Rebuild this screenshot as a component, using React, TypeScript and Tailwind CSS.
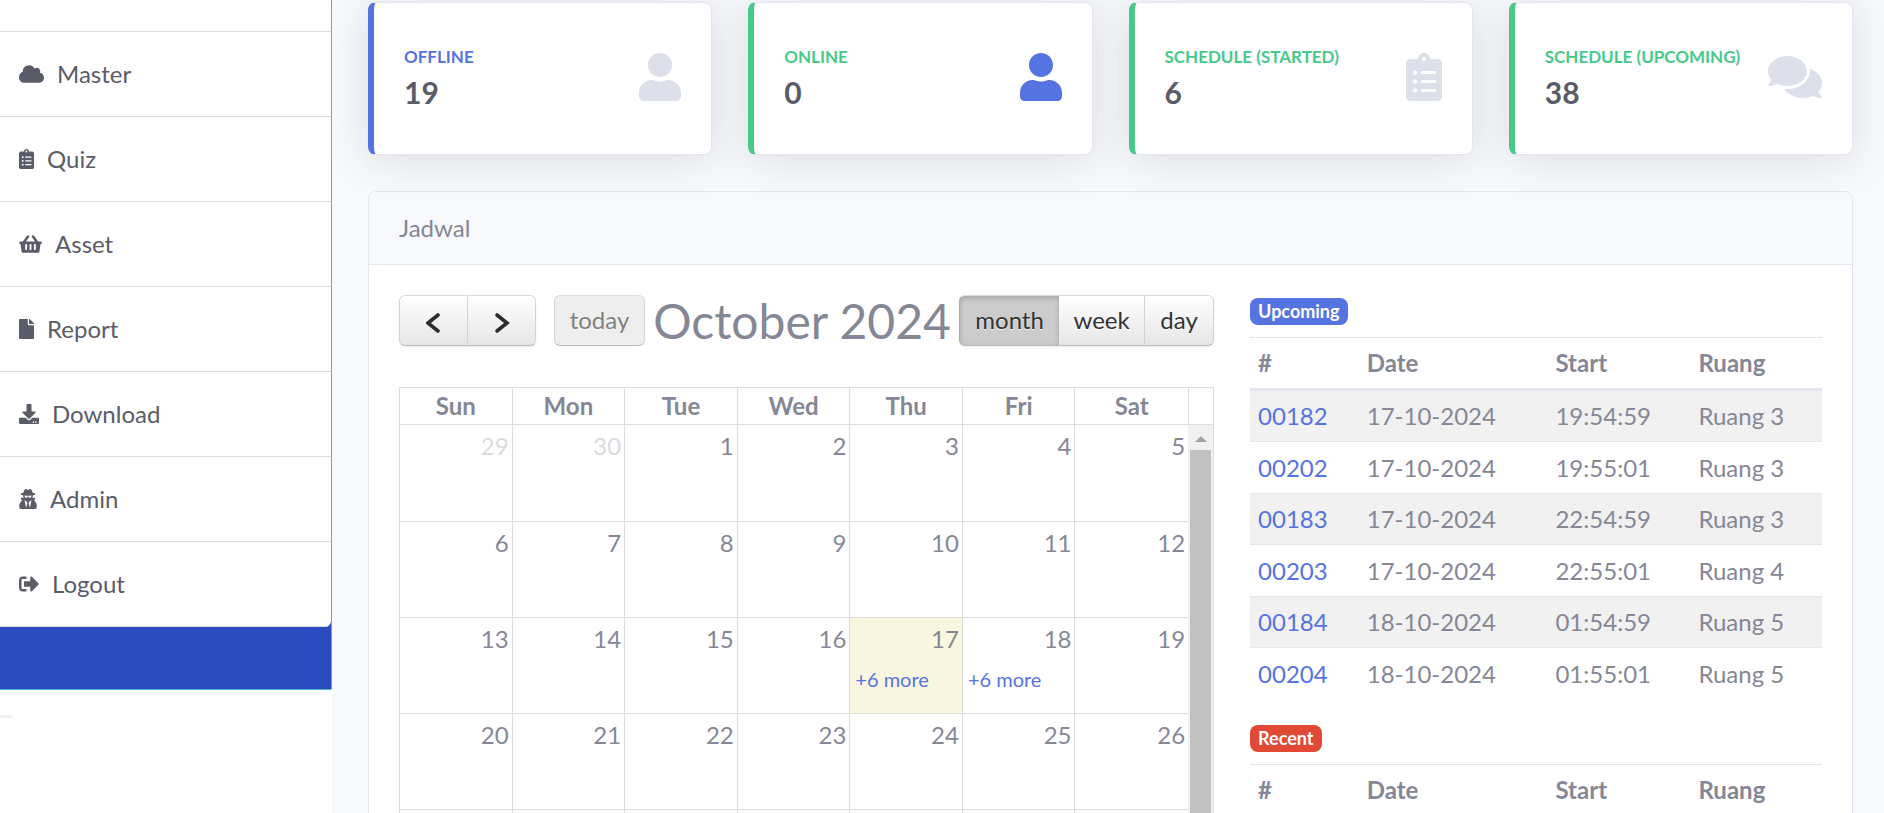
import type { ReactNode } from "react";
import type { IconType } from "react-icons";
import {
  FaClipboardList,
  FaCloud,
  FaComments,
  FaDownload,
  FaFile,
  FaShoppingBasket,
  FaSignOutAlt,
  FaUser,
  FaUserSecret,
} from "react-icons/fa";

const menu: { label: string; icon: IconType; size: string }[] = [
  { label: "Master", icon: FaCloud, size: "w-[25px]" },
  { label: "Quiz", icon: FaClipboardList, size: "w-[15px]" },
  { label: "Asset", icon: FaShoppingBasket, size: "w-[23px]" },
  { label: "Report", icon: FaFile, size: "w-[15px]" },
  { label: "Download", icon: FaDownload, size: "w-5" },
  { label: "Admin", icon: FaUserSecret, size: "w-[18px]" },
  { label: "Logout", icon: FaSignOutAlt, size: "w-5" },
];

const stats = [
  { label: "Offline", value: 19, icon: FaUser, size: "w-[42px]", edge: "border-l-[#5673e2]", text: "text-[#5673e2]", tint: "text-[#dddfeb]" },
  { label: "Online", value: 0, icon: FaUser, size: "w-[42px]", edge: "border-l-[#48c98a]", text: "text-[#48c98a]", tint: "text-[#5673e2]" },
  { label: "Schedule (Started)", value: 6, icon: FaClipboardList, size: "w-9", edge: "border-l-[#48c98a]", text: "text-[#48c98a]", tint: "text-[#dddfeb]" },
  { label: "Schedule (Upcoming)", value: 38, icon: FaComments, size: "w-[54px]", edge: "border-l-[#48c98a]", text: "text-[#48c98a]", tint: "text-[#dddfeb]" },
];

const weekdays = ["Sun", "Mon", "Tue", "Wed", "Thu", "Fri", "Sat"];

const weeks = [
  [29, 30, 1, 2, 3, 4, 5],
  [6, 7, 8, 9, 10, 11, 12],
  [13, 14, 15, 16, 17, 18, 19],
  [20, 21, 22, 23, 24, 25, 26],
];

const upcoming = [
  ["00182", "17-10-2024", "19:54:59", "Ruang 3"],
  ["00202", "17-10-2024", "19:55:01", "Ruang 3"],
  ["00183", "17-10-2024", "22:54:59", "Ruang 3"],
  ["00203", "17-10-2024", "22:55:01", "Ruang 4"],
  ["00184", "18-10-2024", "01:54:59", "Ruang 5"],
  ["00204", "18-10-2024", "01:55:01", "Ruang 5"],
];

function Sidebar() {
  return (
    <aside className="w-[332px] shrink-0 bg-white">
      <div className="overflow-hidden rounded-br-[2px] border-r border-b border-[#4fb3cc] bg-[#2c4bc0]">
        <nav className="overflow-hidden rounded-br-md bg-white">
          <div className="h-8 border-b border-[#dcdcdc]" />
          {menu.map(({ label, icon: Icon, size }) => (
            <a
              key={label}
              href="#"
              className="flex h-[85px] items-center gap-[13px] border-b border-[#dcdcdc] pl-[19px] text-[#5a5c69]"
            >
              <Icon className={`h-5 ${size}`} />
              {label}
            </a>
          ))}
        </nav>
        <div className="h-[62px]" />
      </div>
      <div className="mt-[25px] h-[3px] w-3 rounded-r-full bg-[#f0f0f0]" />
    </aside>
  );
}

function StatCards() {
  return (
    <div className="grid grid-cols-4 gap-9">
      {stats.map(({ label, value, icon: Icon, size, edge, text, tint }) => (
        <section
          key={label}
          className={`flex h-[153px] items-center justify-between rounded-lg border border-l-[6px] border-[#e3e6f0] bg-white pr-[30px] pb-1 pl-[30px] shadow-[0_4px_42px_0_rgba(58,59,69,0.15)] ${edge}`}
        >
          <div>
            <h2 className={`text-[17px] leading-[26px] font-bold whitespace-nowrap uppercase ${text}`}>{label}</h2>
            <p className="mt-1 text-[30px] leading-9 font-bold text-[#5a5c69]">{value}</p>
          </div>
          <Icon className={`h-12 shrink-0 ${size} ${tint}`} />
        </section>
      ))}
    </div>
  );
}

function ToolButton({ className, label, children }: { className: string; label?: string; children: ReactNode }) {
  return (
    <button
      type="button"
      aria-label={label}
      className={`flex h-[51px] items-center justify-center border-y border-t-[#dcdcdc] border-b-[#bdbdbd] pb-[2px] [text-shadow:0_1px_1px_rgba(255,255,255,0.75)] ${className}`}
    >
      {children}
    </button>
  );
}

function Chevron({ points }: { points: string }) {
  return (
    <svg viewBox="0 0 16 22" className="mt-[6px] h-[22px] w-4" fill="none" stroke="#2d2d2d" strokeWidth="3.6" strokeLinecap="round">
      <polyline points={points} />
    </svg>
  );
}

function Toolbar() {
  const raised = "bg-linear-to-b from-white to-[#e6e6e6] text-[#333]";
  return (
    <div className="flex items-center justify-between">
      <div className="flex gap-[18px]">
        <div className="flex rounded-md shadow-[0_1px_2px_rgba(0,0,0,0.08)]">
          <ToolButton label="Previous" className={`w-[69px] rounded-l-md border-x border-x-[#d4d4d4] ${raised}`}>
            <Chevron points="12,3 2,11 12,19" />
          </ToolButton>
          <ToolButton label="Next" className={`w-[68px] rounded-r-md border-r border-r-[#d4d4d4] ${raised}`}>
            <Chevron points="3,3 13,11 3,19" />
          </ToolButton>
        </div>
        <ToolButton className="w-[91px] rounded-md border-x border-x-[#d4d4d4] bg-[#eeeeee] text-[#808080]">today</ToolButton>
      </div>
      <h2 className="text-[48px] leading-[51px] whitespace-nowrap">October 2024</h2>
      <div className="flex rounded-md shadow-[0_1px_2px_rgba(0,0,0,0.08)]">
        <ToolButton className="w-[100px] rounded-l-md border-l border-l-[#aaa] bg-[#cccccc] text-[#333] shadow-[inset_0_2px_5px_rgba(0,0,0,0.2)]">
          month
        </ToolButton>
        <ToolButton className={`w-[86px] border-r border-r-[#d4d4d4] ${raised}`}>week</ToolButton>
        <ToolButton className={`w-[69px] rounded-r-md border-r border-r-[#d4d4d4] ${raised}`}>day</ToolButton>
      </div>
    </div>
  );
}

function Calendar() {
  return (
    <div className="mt-[41px] border border-[#dddddd]">
      <div className="grid grid-cols-[1fr_25px]">
        <table className="w-full table-fixed border-separate border-spacing-0">
          <thead>
            <tr>
              {weekdays.map((d) => (
                <th key={d} scope="col" className="h-[37px] border-r border-b border-[#dddddd] p-0 text-center font-bold last:border-r-0">
                  {d}
                </th>
              ))}
            </tr>
          </thead>
        </table>
        <div className="border-b border-l border-[#dddddd]" />
      </div>
      <div className="grid grid-cols-[1fr_25px]">
        <table className="w-full table-fixed border-separate border-spacing-0">
          <tbody>
            {weeks.map((week, w) => (
              <tr key={week[0]} className="h-24 first:h-[97px]">
                {week.map((day) => (
                  <td
                    key={day}
                    className={`border-r border-b border-[#dddddd] p-0 align-top last:border-r-0 ${day === 17 ? "bg-[#faf7e1]" : ""}`}
                  >
                    <div className={`pt-[3px] pr-[3px] text-right leading-9 ${w === 0 && day > 20 ? "opacity-30" : ""}`}>{day}</div>
                    {(day === 17 || day === 18) && (
                      <a href="#" className="block pl-[5px] text-[20px] leading-[44px] text-[#5673e2]">
                        +6 more
                      </a>
                    )}
                  </td>
                ))}
              </tr>
            ))}
            <tr className="h-24">
              {weekdays.map((d) => (
                <td key={d} className="border-r border-[#dddddd] last:border-r-0" />
              ))}
            </tr>
          </tbody>
        </table>
        <div className="flex flex-col items-center bg-[#f1f1f1]">
          <div className="flex h-[25px] w-full shrink-0 items-center justify-center">
            <svg viewBox="0 0 12 6" className="mt-[2px] h-[6px] w-3" fill="#a3a3a3">
              <polygon points="6,0 12,6 0,6" />
            </svg>
          </div>
          <div className="w-[21px] flex-1 bg-[#c1c1c1]" />
        </div>
      </div>
    </div>
  );
}

function ScheduleTable({ title, badge, rows }: { title: string; badge: string; rows: string[][] }) {
  return (
    <section>
      <h3 className={`mb-3 flex h-[27px] w-fit items-center rounded-lg px-2 pb-px text-[18px] font-bold text-white ${badge}`}>{title}</h3>
      <table className="w-full table-fixed border-separate border-spacing-0 text-left">
        <thead>
          <tr className="h-[54px]">
            {[
              ["#", "w-[19%]"],
              ["Date", "w-[33%]"],
              ["Start", "w-[25%]"],
              ["Ruang", "w-[23%]"],
            ].map(([name, width]) => (
              <th key={name} scope="col" className={`border-t border-b-3 border-[#e3e6f0] px-2 py-0 font-bold ${width}`}>
                {name}
              </th>
            ))}
          </tr>
        </thead>
        <tbody>
          {rows.map(([id, date, start, room]) => (
            <tr key={id} className="group odd:h-[51px] odd:bg-[#f1f1f2] even:h-[52px]">
              <td className="border-b border-[#e3e6f0] px-2 py-0 group-last:border-b-0">
                <a href="#" className="text-[#5673e2]">
                  {id}
                </a>
              </td>
              <td className="border-b border-[#e3e6f0] px-2 py-0 group-last:border-b-0">{date}</td>
              <td className="border-b border-[#e3e6f0] px-2 py-0 group-last:border-b-0">{start}</td>
              <td className="border-b border-[#e3e6f0] px-2 py-0 group-last:border-b-0">{room}</td>
            </tr>
          ))}
        </tbody>
      </table>
    </section>
  );
}

export default function App() {
  return (
    <div className="flex h-screen overflow-hidden bg-[#f8f9fc] font-[Lato,'Noto_Sans',sans-serif] text-[24px] leading-9 text-[#858796]">
      <Sidebar />
      <main className="min-w-0 flex-1 overflow-hidden pt-[2px] pr-[31px] pl-9">
        <StatCards />
        <section className="mt-9 rounded-lg border border-[#e3e6f0] bg-white">
          <h2 className="rounded-t-lg border-b border-[#e3e6f0] bg-[#f8f9fc] px-[30px] py-[18px]">Jadwal</h2>
          <div className="grid grid-cols-12 gap-9 p-[30px]">
            <div className="col-span-7">
              <Toolbar />
              <Calendar />
            </div>
            <div className="col-span-5 flex flex-col gap-[25px] pt-[3px]">
              <ScheduleTable title="Upcoming" badge="bg-[#5673e2]" rows={upcoming} />
              <ScheduleTable title="Recent" badge="bg-[#df4936]" rows={[]} />
            </div>
          </div>
        </section>
      </main>
    </div>
  );
}
